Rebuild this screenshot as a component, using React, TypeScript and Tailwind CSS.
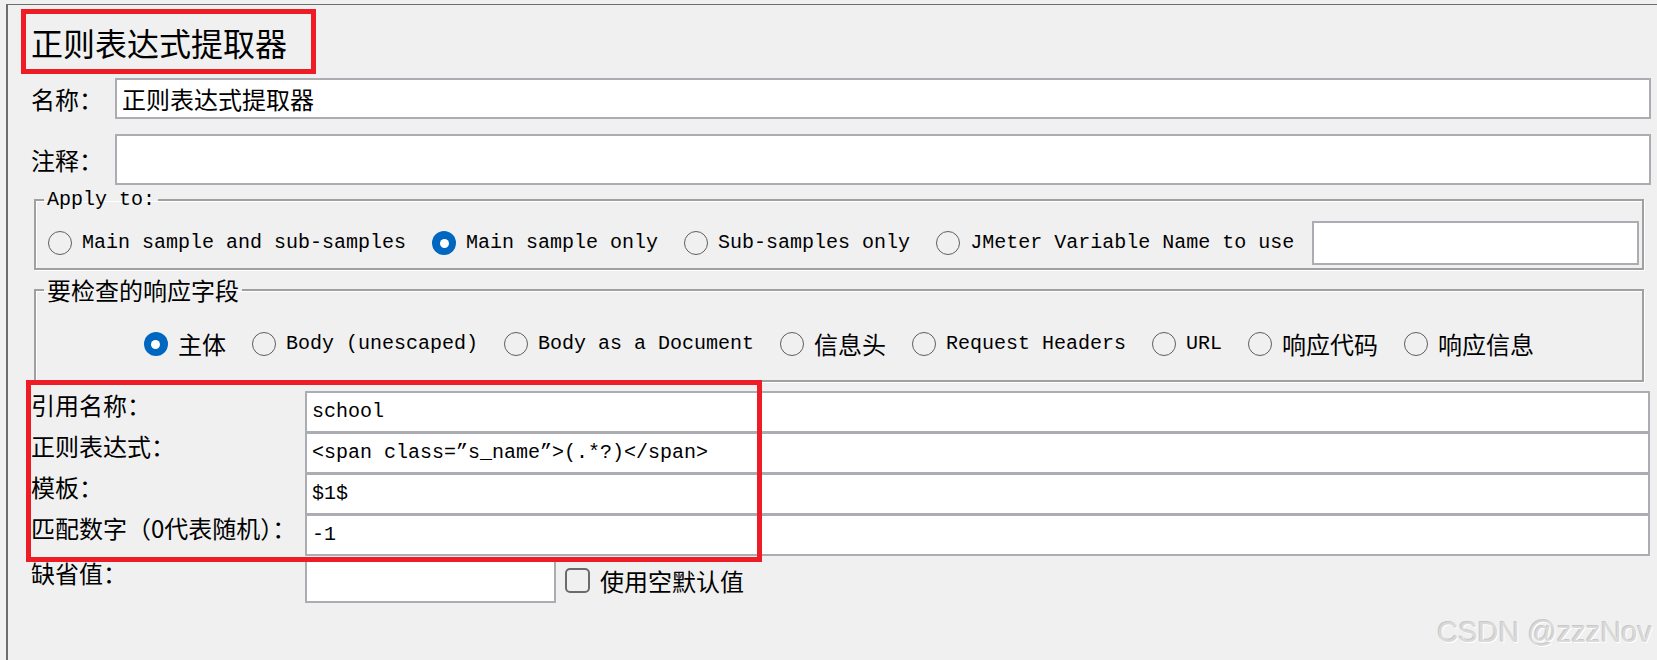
import React from 'react';

// ─── Fonts ────────────────────────────────────────────────────────────────────
const CN = "font-['Noto_Sans_CJK_SC',sans-serif] text-[24px] leading-[24px] text-black";
const MONO = "font-['Liberation_Mono','Noto_Sans_CJK_SC',monospace] text-[20px] leading-[24px] text-black";

const FIELD = 'bg-white border-2 border-[#abadb3] flex items-center pl-[5px]';

// ─── Radio ────────────────────────────────────────────────────────────────────
function Radio({ label, checked = false, cjk = false }: { label: string; checked?: boolean; cjk?: boolean }) {
  return (
    <label className="flex items-center gap-[10px] shrink-0">
      {checked ? (
        <span className="w-6 h-6 rounded-full bg-[#0067c0] flex items-center justify-center">
          <span className="w-[9px] h-[9px] rounded-full bg-white" />
        </span>
      ) : (
        <span className="w-6 h-6 rounded-full border-[1.5px] border-[#5f5f5f]" />
      )}
      <span className={cjk ? CN : MONO}>{label}</span>
    </label>
  );
}

// ─── Etched group box ─────────────────────────────────────────────────────────
function Group({ legend, cjk = false, className, children }: { legend: string; cjk?: boolean; className: string; children: React.ReactNode }) {
  return (
    <fieldset
      className={`border-2 border-[#a0a0a0] shadow-[inset_1px_1px_0_#fff,1px_1px_0_#fff] ml-[26px] mr-[13px] ${className}`}
    >
      <legend className={`ml-[8px] px-[3px] ${cjk ? CN : MONO}`}>{legend}</legend>
      {children}
    </fieldset>
  );
}

// ─── Extractor fields ─────────────────────────────────────────────────────────
const ROWS = [
  { label: '引用名称：', value: 'school' },
  { label: '正则表达式：', value: '<span class=”s_name”>(.*?)</span>' },
  { label: '模板：', value: '$1$' },
  { label: '匹配数字（0代表随机）：', value: '-1' },
];

export default function App() {
  return (
    <div className="w-[1657px] h-[660px] bg-[#f0f0f0] overflow-hidden pt-[4px] pl-[6px]">
      <div className="relative h-[656px] border-t border-l-2 border-[#6d6d6d]">
        {/* Title */}
        <div className="mt-[4px] ml-[13px] w-[295px] h-[65px] border-[5px] border-[#ee1c24] flex items-center pl-[5px]">
          <span className="font-['Noto_Sans_CJK_SC',sans-serif] text-[32px] leading-[34px] text-black">正则表达式提取器</span>
        </div>

        {/* 名称 */}
        <div className="mt-[4px] flex items-center h-[41px] mr-[6px]">
          <span className={`ml-[23px] w-[84px] ${CN}`}>名称：</span>
          <div className={`flex-1 h-full ${FIELD}`}>
            <span className={CN}>正则表达式提取器</span>
          </div>
        </div>

        {/* 注释 */}
        <div className="mt-[15px] flex items-center h-[51px] mr-[6px]">
          <span className={`ml-[23px] w-[84px] ${CN}`}>注释：</span>
          <div className={`flex-1 h-full ${FIELD}`} />
        </div>

        {/* Apply to */}
        <Group legend="Apply to:" className="mt-[3px]">
          <div className="flex items-center gap-[18px] pt-[9px] pb-[3px] pl-[12px] pr-[3px]">
            <div className="flex items-center gap-[26px]">
              <Radio label="Main sample and sub-samples" />
              <Radio label="Main sample only" checked />
              <Radio label="Sub-samples only" />
              <Radio label="JMeter Variable Name to use" />
            </div>
            <div className={`flex-1 h-[44px] ${FIELD}`} />
          </div>
        </Group>

        {/* 要检查的响应字段 */}
        <Group legend="要检查的响应字段" cjk className="mt-[8px]">
          <div className="flex items-center justify-center gap-[26px] pt-[30px] pb-[24px]">
            <Radio label="主体" checked cjk />
            <Radio label="Body (unescaped)" />
            <Radio label="Body as a Document" />
            <Radio label="信息头" cjk />
            <Radio label="Request Headers" />
            <Radio label="URL" />
            <Radio label="响应代码" cjk />
            <Radio label="响应信息" cjk />
          </div>
        </Group>

        {/* Extractor settings */}
        <div className="mt-[9px] mr-[7px]">
          {ROWS.map((row, i) => (
            <div key={row.label} className={`flex items-start ${i > 0 ? '-mt-px' : ''}`}>
              <span className={`ml-[23px] w-[274px] pt-[2px] whitespace-nowrap ${CN}`}>{row.label}</span>
              <div className={`flex-1 h-[42px] ${FIELD}`}>
                <span className={MONO}>{row.value}</span>
              </div>
            </div>
          ))}
          <div className="flex items-start mt-[2px]">
            <span className={`ml-[23px] w-[274px] pt-[3px] ${CN}`}>缺省值：</span>
            <div className="flex items-center gap-[9px]">
              <div className={`w-[251px] h-[45px] ${FIELD}`} />
              <div className="flex items-center gap-[10px]">
                <span className="w-[25px] h-[25px] rounded-[5px] border-2 border-[#6b6b6b]" />
                <span className={CN}>使用空默认值</span>
              </div>
            </div>
          </div>
        </div>

        {/* Annotation box over the extractor fields */}
        <div className="absolute left-[18px] top-[375px] w-[736px] h-[182px] border-[5px] border-[#ee1c24] pointer-events-none" />

        {/* Watermark */}
        <span className="absolute right-[5px] top-[612px] font-['Liberation_Sans',sans-serif] text-[29px] leading-[30px] text-[#d9d9d9] [text-shadow:1px_1px_0_#ffffff,-1px_-1px_0_#c8c8c8]">
          CSDN @zzzNov
        </span>
      </div>
    </div>
  );
}
